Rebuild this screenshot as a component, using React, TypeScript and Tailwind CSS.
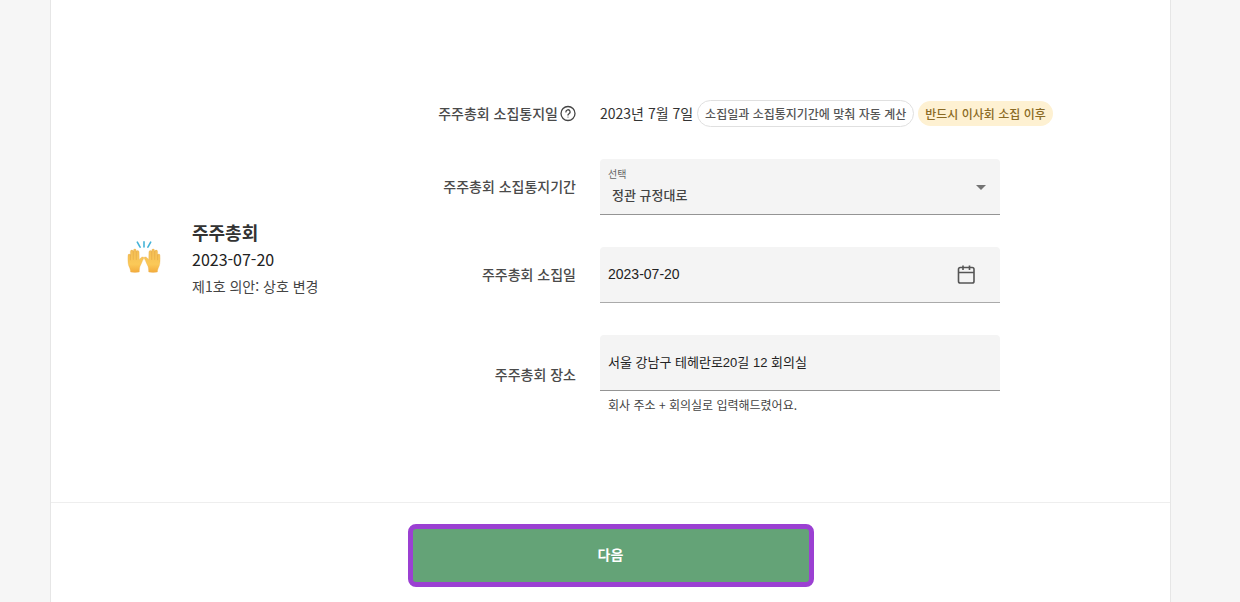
import { useState, type ReactNode } from "react";

interface RowProps {
  label: string;
  htmlFor?: string;
  help?: boolean;
  children: ReactNode;
}

function HelpIcon() {
  return (
    <svg width="18" height="18" viewBox="0 0 18 18" fill="none" stroke="#444" strokeWidth="1.3" strokeLinecap="round" strokeLinejoin="round">
      <circle cx="10" cy="9.5" r="7" />
      <path d="M7.9 7.9a2.1 2.1 0 1 1 3.1 1.8c-.7.4-1 .7-1 1.3" />
      <circle cx="10" cy="13" r=".6" fill="#444" stroke="none" />
    </svg>
  );
}

function CalendarIcon() {
  return (
    <svg width="20" height="20" viewBox="0 0 20 20" fill="none" stroke="#555" strokeWidth="1.6">
      <rect x="2.5" y="2.5" width="15.5" height="15.5" rx="1.8" />
      <path d="M2.5 7.5h15.5M7 .5v4.5M13.5 .5v4.5" />
    </svg>
  );
}

function Hand() {
  return (
    <>
      <path
        d="M3.6 31c-.1-2.6-1-4.3-1.9-6.3C.9 22.6.8 18.5 1 14.5c.1-1.8 2-1.8 2.3-.3l.1-3.7c.1-1.8 2.6-1.9 2.8-.1l.2-1.2c.3-1.7 2.7-1.6 2.9.2v1.2c.4-1.6 2.7-1.4 2.8.4l.2 7.7c.8-1.3 2-2.6 3.2-2.8 1.3-.1 1.7.8 1.1 1.8-1.5 2.3-2.1 5.2-3.4 7.2-.6 1-.8 3.5-.9 6.1-2.3.6-6.500.6-8.700 0z"
        fill="url(#skin)"
        stroke="#e6ac50"
        strokeWidth=".3"
      />
      <path d="M3.4 13.5v5.3M6.3 10.5v7.9M9.3 10.6v7.9" fill="none" stroke="#dfa044" strokeWidth=".5" strokeLinecap="round" />
    </>
  );
}

function RaisedHands() {
  return (
    <svg width="34" height="34" viewBox="0 0 34 34" className="shrink-0" aria-hidden="true">
      <defs>
        <linearGradient id="skin" x1="0" y1="0" x2="0" y2="1">
          <stop offset="0" stopColor="#f3bd55" />
          <stop offset=".65" stopColor="#fbc958" />
          <stop offset="1" stopColor="#f3ab3c" />
        </linearGradient>
      </defs>
      <Hand />
      <g transform="translate(34 0) scale(-1 1)">
        <Hand />
      </g>
      <path d="M10.3 1.2l2.8 5M17 .8v5.2M23.7 1.2l-2.8 5" stroke="#45b3d8" strokeWidth="1.6" strokeLinecap="round" />
    </svg>
  );
}

function Row({ label, htmlFor, help, children }: RowProps) {
  return (
    <div className="flex items-center gap-6">
      <div className="flex w-[200px] shrink-0 items-center justify-end pb-0.5 text-sm font-medium text-[#4a4a4a]">
        {htmlFor ? <label htmlFor={htmlFor}>{label}</label> : <span>{label}</span>}
        {help && (
          <button type="button" aria-label="도움말">
            <HelpIcon />
          </button>
        )}
      </div>
      <div className="min-w-0 flex-1">{children}</div>
    </div>
  );
}

export default function App() {
  const [period, setPeriod] = useState("rule");
  const [date, setDate] = useState("2023-07-20");
  const [place, setPlace] = useState("서울 강남구 테헤란로20길 12 회의실");

  return (
    <div lang="ko" className="min-h-screen bg-[#f6f6f6] pr-[69px] pl-[50px] font-['Noto_Sans_CJK_KR',sans-serif]">
      <main className="flex min-h-screen flex-col border-x border-[#e6e6e6] bg-white">
        <section className="flex items-center pt-[100px] pb-[87px] pl-[76px]">
          <div className="flex w-[249px] shrink-0 items-center gap-[31px]">
            <RaisedHands />
            <div className="pt-1 whitespace-nowrap">
              <h1 className="text-lg leading-[27px] font-bold text-[#333]">주주총회</h1>
              <p className="text-base leading-[27px] text-[#222]">{date}</p>
              <p className="text-sm leading-[27px] text-[#444]">제1호 의안: 상호 변경</p>
            </div>
          </div>

          <form className="flex flex-1 flex-col gap-8">
            <Row label="주주총회 소집통지일" help>
              <div className="flex items-center gap-1 whitespace-nowrap">
                <span className="pb-0.5 text-sm text-[#333]">2023년 7월 7일</span>
                <span className="rounded-full border border-[#e0e0e0] px-[7px] text-xs leading-[25px] font-medium text-[#555]">
                  소집일과 소집통지기간에 맞춰 자동 계산
                </span>
                <span className="rounded-full bg-[#fef1d2] px-[7px] text-xs leading-[25px] font-medium text-[#8a6a24]">
                  반드시 이사회 소집 이후
                </span>
              </div>
            </Row>

            <Row label="주주총회 소집통지기간" htmlFor="period">
              <div className="relative h-14 max-w-[400px]">
                <select
                  id="period"
                  value={period}
                  onChange={(e) => setPeriod(e.target.value)}
                  className="h-14 w-full appearance-none rounded-t border-b border-[#949494] bg-[#f4f4f4] px-3 pt-4 text-[13px] font-medium text-[#444] outline-none"
                >
                  <option value="rule">정관 규정대로</option>
                </select>
                <span className="pointer-events-none absolute top-2 left-2 text-[10px] leading-[14px] text-[#666]">선택</span>
                <svg width="10" height="5" viewBox="0 0 10 5" className="pointer-events-none absolute top-[26px] right-[14px]">
                  <path d="M0 0h10L5 5z" fill="#737373" />
                </svg>
              </div>
            </Row>

            <Row label="주주총회 소집일" htmlFor="date">
              <div className="flex h-14 max-w-[400px] items-center rounded-t border-b border-[#aaa] bg-[#f4f4f4] pr-6 pl-2">
                <input
                  id="date"
                  value={date}
                  onChange={(e) => setDate(e.target.value)}
                  className="min-w-0 flex-1 pb-0.5 font-['Liberation_Sans','Noto_Sans_CJK_KR',sans-serif] text-sm text-[#222] outline-none"
                />
                <button type="button" aria-label="날짜 선택">
                  <CalendarIcon />
                </button>
              </div>
            </Row>

            <Row label="주주총회 장소" htmlFor="place">
              <div className="max-w-[400px]">
                <input
                  id="place"
                  value={place}
                  onChange={(e) => setPlace(e.target.value)}
                  className="block h-14 w-full rounded-t border-b border-[#949494] bg-[#f4f4f4] px-2 pb-0.5 font-['Liberation_Sans','Noto_Sans_CJK_KR',sans-serif] text-[13px] text-[#222] outline-none"
                />
                <p className="px-2 pt-1 text-xs leading-5 text-[#444]">회사 주소 + 회의실로 입력해드렸어요.</p>
              </div>
            </Row>
          </form>
        </section>

        <footer className="flex justify-center border-t border-[#eee] pt-[21px] pb-4">
          <button type="button" className="h-[63px] w-[406px] rounded-lg border-[5px] border-[#9b40d2] bg-[#64a377] pb-1 text-sm font-bold text-white">
            다음
          </button>
        </footer>
      </main>
    </div>
  );
}
